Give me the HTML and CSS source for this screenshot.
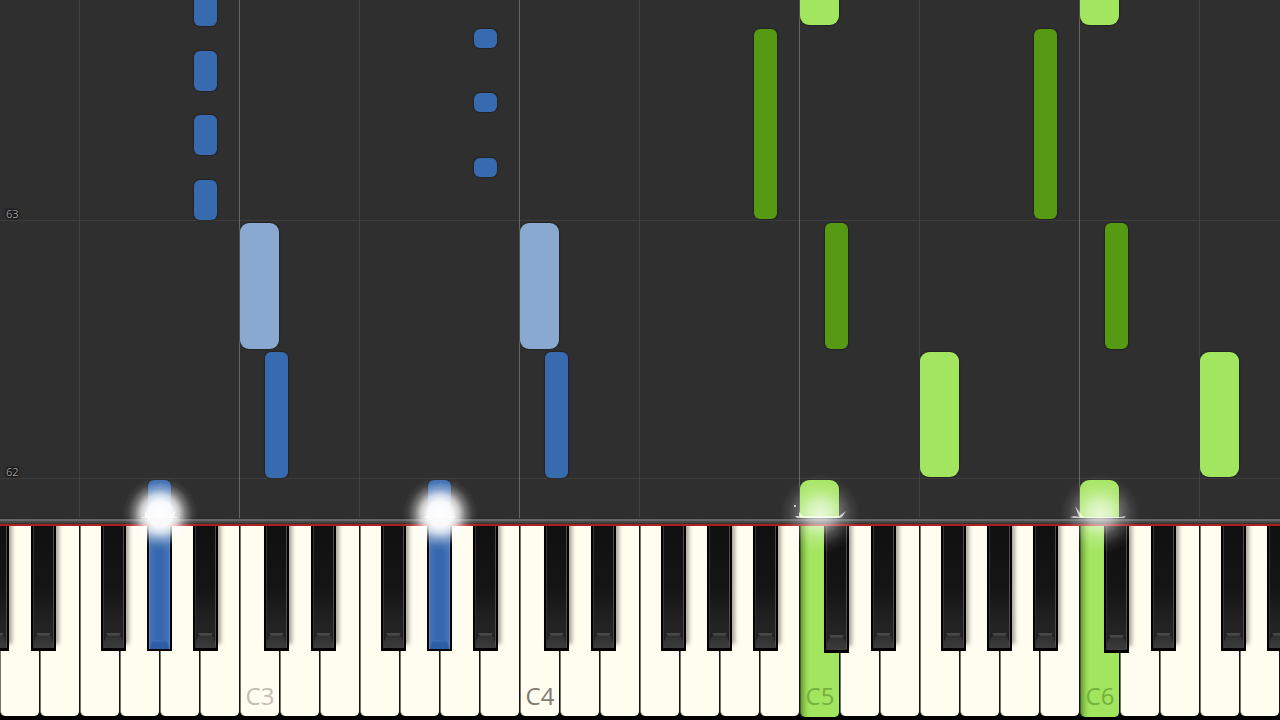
FILE: index.html
```html
<!DOCTYPE html>
<html lang="en">
<head>
  <meta charset="UTF-8">
  <meta name="viewport" content="width=device-width, initial-scale=1">
  <title>Piano Roll</title>
  <link rel="stylesheet" href="styles.css">
</head>
<body>
  <main class="roll" id="roll">
    <div class="bar-line bar-line-62"><span class="bar-number">62</span></div>
    <div class="bar-line bar-line-63"><span class="bar-number">63</span></div>
  </main>

  <div class="rail"></div>
  <div class="felt"></div>

  <div class="keyboard" id="keyboard"></div>

  <script src="script.js"></script>
</body>
</html>
```

FILE: styles.css
```css
:root {
  --roll-bg: #2f2f2f;
  --octave-line: #666;
  --fourth-line: #404040;
  --blue: #376aae;
  --blue-light: #89a9d1;
  --green: #559a12;
  --green-light: #a2e55e;
  --ivory: #fffcf0;
}

* {
  box-sizing: border-box;
}

body {
  margin: 0;
  min-height: 100vh;
  display: flex;
  flex-direction: column;
  overflow: hidden;
  background: #000;
  font-family: "Open Sans", "Noto Sans", sans-serif;
}

/* Falling notes */
.roll {
  position: relative;
  flex: 1;
  overflow: hidden;
  background: var(--roll-bg);
}

.grid-line {
  position: absolute;
  top: 0;
  bottom: 0;
  width: 1px;
  margin-left: -1px;
  background: var(--fourth-line);
}

.grid-line.octave {
  background: var(--octave-line);
}

.bar-line {
  position: absolute;
  left: 0;
  right: 0;
  height: 18px;
  padding-left: 6px;
  border-bottom: 1px solid #3d3d3d;
}

.bar-line-62 {
  bottom: 39px;
}

.bar-line-63 {
  bottom: 297px;
}

.bar-number {
  display: block;
  font-size: 11px;
  line-height: 22px;
  color: #a0a0a0;
  text-shadow: 0 0 2px #000, 0 0 2px #000, 0 0 3px #000;
}

.note {
  position: absolute;
  box-shadow: 0 0 1px 1px rgba(0, 0, 0, 0.25);
}

.note.natural {
  border-radius: 9px;
}

.note.sharp {
  border-radius: 6px;
}

.note.playing {
  border-bottom-left-radius: 0;
  border-bottom-right-radius: 0;
}

.left.sharp {
  background: var(--blue);
}

.left.natural {
  background: var(--blue-light);
}

.right.sharp {
  background: var(--green);
}

.right.natural {
  background: var(--green-light);
}

/* Strip between the roll and the keys, it covers the tops of the key shadows */
.rail,
.felt {
  position: relative;
  z-index: 2;
}

.rail {
  height: 6px;
  background: linear-gradient(#2a2a2a 0 1px, #666 1px 3px, #484848 3px 5px, #333 5px);
}

.felt {
  height: 2px;
  background: linear-gradient(#a92220, #b3201d);
}

/* Keys */
.keyboard {
  position: relative;
  display: flex;
  height: 194px;
}

.key-slot {
  position: relative;
  flex: 1;
}

.key {
  display: block;
  margin: 0;
  padding: 0;
  border: 0;
  font: inherit;
}

.white-key {
  width: 100%;
  height: 190px;
  padding-top: 150px;
  border-left: 1px solid #777369;
  border-right: 1px solid #111;
  border-radius: 0 0 5px 5px;
  background: var(--ivory);
  font-size: 24px;
  line-height: 40px;
  color: #c2bfb3;
}

.white-key.middle {
  color: #807d75;
}

.white-key.pressed {
  height: 191px;
  padding-top: 148px;
  border-left-color: #3f6322;
  background: linear-gradient(90deg, #6ba039, #93d453 5px, var(--green-light) 8px);
  color: #75b03f;
}

.black-key {
  position: absolute;
  z-index: 1;
  top: 0;
  width: 62.5%;
  height: 125px;
  background: #000;
  box-shadow: 3px -7px 4px rgba(40, 35, 30, 0.4);
}

.black-key::before {
  content: "";
  position: absolute;
  top: 0;
  left: 2px;
  right: 2px;
  bottom: 3px;
  border: 1px solid #36342f;
  border-top: 0;
  border-right-color: #514e49;
  background: linear-gradient(#101010, #141414 50%, #242424 85%, #1c1c1c);
}

.black-key::after {
  content: "";
  position: absolute;
  left: 3px;
  right: 3px;
  bottom: 3px;
  height: 15px;
  clip-path: polygon(10% 0, 90% 0, 80% 14%, 92% 28%, 100% 60%, 100% 100%, 0 100%, 0 60%, 8% 28%, 20% 14%);
  background: linear-gradient(#484848 0 2px, #303030 3px, #3c3c3c);
}

.black-key.lowered {
  height: 127px;
}

.black-key.pressed {
  box-shadow: none;
}

.black-key.pressed::before {
  bottom: 2px;
  border-color: #5985c3;
  background: linear-gradient(90deg, #4270b4, #3567ac 40%, #3567ac 60%, #4574b8);
}

.black-key.pressed::after {
  bottom: 2px;
  height: 9px;
  clip-path: polygon(12% 0, 88% 0, 100% 100%, 0 100%);
  background: linear-gradient(#4272b8, #2b5da5 3px);
}

/* Light over the key being struck */
.glow {
  position: absolute;
  z-index: 3;
  top: -52px;
  width: 90px;
  height: 80px;
  margin-left: -45px;
  pointer-events: none;
}

.glow.left {
  background: radial-gradient(circle closest-side, #fff 0, rgba(255, 255, 255, 0.96) 32%, rgba(255, 255, 255, 0.74) 48%, rgba(255, 255, 255, 0.34) 64%, rgba(255, 255, 255, 0.08) 80%, transparent 94%);
}

.glow.right {
  background: radial-gradient(circle closest-side, rgba(255, 255, 255, 0.75) 0, rgba(255, 255, 255, 0.55) 30%, rgba(255, 255, 255, 0.24) 56%, rgba(255, 255, 255, 0.07) 80%, transparent 100%);
}

.glow svg {
  display: block;
  width: 90px;
  height: 80px;
}
```

FILE: script.js
```js
const WHITE_KEYS = 32;
const NAMES = ['D', 'E', 'F', 'G', 'A', 'B', 'C'];

// Left edge of each black key, in white key widths from its own natural
const SHARP_OFFSET = { C: 0.6, D: 0.775, F: 0.525, G: 0.675, A: 0.825 };

// key: white key index, from: height above the rail, len: length, in px
const notes = [
  { hand: 'left', key: 4, sharp: true, from: 492, len: 60 },
  { hand: 'left', key: 4, sharp: true, from: 427, len: 40 },
  { hand: 'left', key: 4, sharp: true, from: 363, len: 40 },
  { hand: 'left', key: 4, sharp: true, from: 298, len: 40 },
  { hand: 'left', key: 11, sharp: true, from: 470, len: 19 },
  { hand: 'left', key: 11, sharp: true, from: 406, len: 19 },
  { hand: 'left', key: 11, sharp: true, from: 341, len: 19 },
  { hand: 'left', key: 6, from: 169, len: 126 },
  { hand: 'left', key: 13, from: 169, len: 126 },
  { hand: 'left', key: 6, sharp: true, from: 40, len: 126 },
  { hand: 'left', key: 13, sharp: true, from: 40, len: 126 },
  { hand: 'left', key: 3, sharp: true, from: 0, len: 38, playing: true },
  { hand: 'left', key: 10, sharp: true, from: 0, len: 38, playing: true },
  { hand: 'right', key: 20, from: 493, len: 60 },
  { hand: 'right', key: 27, from: 493, len: 60 },
  { hand: 'right', key: 18, sharp: true, from: 299, len: 190 },
  { hand: 'right', key: 25, sharp: true, from: 299, len: 190 },
  { hand: 'right', key: 20, sharp: true, from: 169, len: 126 },
  { hand: 'right', key: 27, sharp: true, from: 169, len: 126 },
  { hand: 'right', key: 23, from: 41, len: 125 },
  { hand: 'right', key: 30, from: 41, len: 125 },
  { hand: 'right', key: 20, from: 0, len: 38, playing: true },
  { hand: 'right', key: 27, from: 0, len: 38, playing: true }
];

// Splinters of light at the foot of a glow
const SPARKS = {
  3: 'M27 43 L30 43 L30 38 L34 43 L54 43 L61 36 L58 43 L62 43 L62 44 L26 44 Z',
  10: 'M30 43 L33 40 L36 43 L55 43 L60 42 L60 44 L28 44 Z',
  20: 'M20 42 L24 42 L24 38 L28 42 L64 42 L71 37 L67 43 L65 44 L22 44 Z M19 31 h2 v2 h-2 Z',
  27: 'M15 43 L20 42 L24 43 L20 32 L26 40 L29 43 L65 43 L71 42 L69 44 L18 44 Z'
};

const roll = document.getElementById('roll');
const keyboard = document.getElementById('keyboard');

const percent = (keys) => (keys / WHITE_KEYS) * 100 + '%';
const nameOf = (key) => NAMES[key % 7];
const octaveOf = (key) => 2 + Math.floor((key + 1) / 7);

function isPressed(key, sharp) {
  return notes.some((n) => n.playing && n.key === key && Boolean(n.sharp) === sharp);
}

function addGridLines() {
  for (let key = 0; key < WHITE_KEYS; key++) {
    const name = nameOf(key);
    if (name !== 'C' && name !== 'F') continue;
    const line = document.createElement('div');
    line.className = name === 'C' ? 'grid-line octave' : 'grid-line';
    line.style.left = percent(key);
    roll.appendChild(line);
  }
}

function addNote(note) {
  const el = document.createElement('div');
  el.className = `note ${note.hand} ${note.sharp ? 'sharp' : 'natural'}`;
  if (note.playing) el.classList.add('playing');
  el.style.left = percent(note.key + (note.sharp ? SHARP_OFFSET[nameOf(note.key)] + 0.03 : 0));
  el.style.width = percent(note.sharp ? 0.575 : 0.975);
  el.style.bottom = note.from + 'px';
  el.style.height = note.len + 'px';
  roll.appendChild(el);
}

function addBlackKey(slot, key, offset) {
  const black = document.createElement('button');
  black.type = 'button';
  black.className = 'key black-key';
  black.setAttribute('aria-label', nameOf((key + 7) % 7) + ' sharp ' + octaveOf(key));
  black.style.left = offset * 100 + '%';
  if (key >= 0 && isPressed(key, true)) black.classList.add('pressed');
  if (key >= 0 && isPressed(key, false)) black.classList.add('lowered');
  slot.appendChild(black);
}

function addKey(key) {
  const slot = document.createElement('div');
  slot.className = 'key-slot';

  const white = document.createElement('button');
  const name = nameOf(key);
  white.type = 'button';
  white.className = 'key white-key';
  if (name === 'C') {
    white.textContent = name + octaveOf(key);
    if (octaveOf(key) === 4) white.classList.add('middle');
  } else {
    white.setAttribute('aria-label', name + octaveOf(key));
  }
  if (isPressed(key, false)) white.classList.add('pressed');
  slot.appendChild(white);

  // C sharp of the octave that starts left of the window
  if (key === 0) addBlackKey(slot, -1, SHARP_OFFSET.C - 1);
  if (name in SHARP_OFFSET) addBlackKey(slot, key, SHARP_OFFSET[name]);
  keyboard.appendChild(slot);
}

function addGlow(note) {
  const glow = document.createElement('div');
  glow.className = `glow ${note.hand}`;
  glow.style.left = percent(note.key + (note.sharp ? SHARP_OFFSET[nameOf(note.key)] + 0.3125 : 0.5));
  glow.innerHTML = `<svg viewBox="0 0 90 80" aria-hidden="true"><path d="${SPARKS[note.key]}" fill="#fff" fill-opacity="0.7"/></svg>`;
  keyboard.appendChild(glow);
}

addGridLines();
notes.forEach(addNote);
for (let key = 0; key < WHITE_KEYS; key++) addKey(key);
notes.filter((n) => n.playing).forEach(addGlow);
```
